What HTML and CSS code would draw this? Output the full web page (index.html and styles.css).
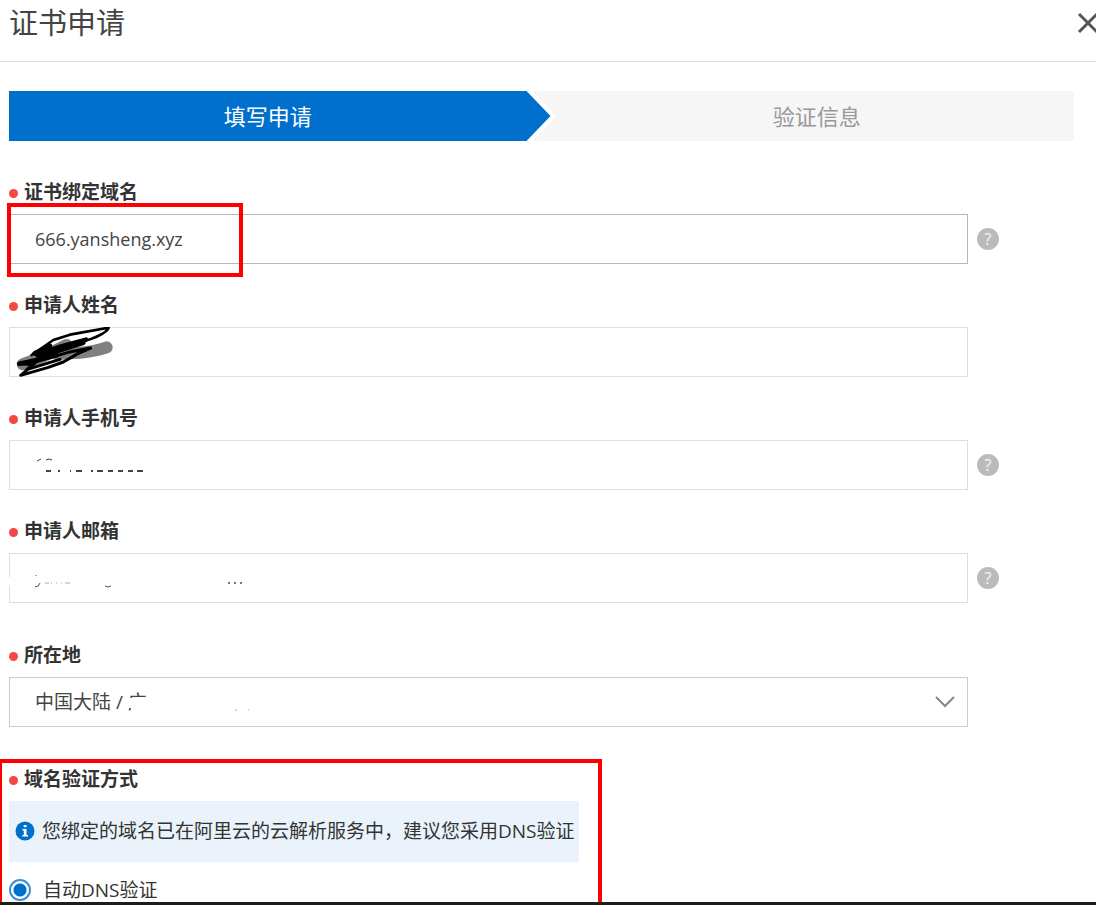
FILE: index.html
```html
<!DOCTYPE html>
<html lang="zh-CN">
<head>
<meta charset="utf-8">
<meta name="viewport" content="width=device-width, initial-scale=1">
<title>证书申请</title>
<link rel="stylesheet" href="styles.css">
</head>
<body>
<div class="panel">
  <header class="panel-header">
    <h1 class="title">证书申请</h1>
    <button class="close" type="button" aria-label="关闭">
      <svg width="22" height="22" viewBox="0 0 22 22"><path d="M2 2L20 20M20 2L2 20"/></svg>
    </button>
  </header>

  <form class="form">
    <ol class="steps">
      <li class="step step-active">填写申请</li>
      <li class="step">验证信息</li>
    </ol>

    <div class="group">
      <label class="label" for="domain">证书绑定域名</label>
      <div class="row">
        <div class="field">
          <input class="control control-dark" id="domain" type="text" value="666.yansheng.xyz">
          <span class="mark mark-domain"></span>
        </div>
        <button class="help" type="button" aria-label="帮助">?</button>
      </div>
    </div>

    <div class="group">
      <label class="label" for="name">申请人姓名</label>
      <div class="row">
        <div class="field">
          <input class="control" id="name" type="text">
          <svg class="ink" width="107" height="52" viewBox="27 111 321 156" fill="none" stroke-linecap="round" stroke-linejoin="round">
            <path d="M68 223L130 199L200 165" stroke="#808080" stroke-width="36"/>
            <path d="M170 192L240 188Q285 184 320 172" stroke="#808080" stroke-width="36"/>
            <path d="M95 195L160 150L210 134L326 113Q318 132 260 151L150 190" stroke="#000" stroke-width="8"/>
            <path d="M104 190L150 168M112 195L180 170L258 149M125 199L200 174L250 158M58 221L100 212L170 196" stroke="#000" stroke-width="14"/>
            <path d="M60 221L100 224L62 256L145 232L190 216L235 190L272 174L205 187L110 215L80 239L180 208" stroke="#000" stroke-width="9"/>
          </svg>
        </div>
      </div>
    </div>

    <div class="group">
      <label class="label" for="phone">申请人手机号</label>
      <div class="row">
        <div class="field">
          <input class="control" id="phone" type="tel">
          <svg class="ink" width="160" height="50" viewBox="0 0 160 50" fill="none" stroke="#444">
            <path d="M28 21L32 19M37 20Q40 18 43 20"/>
            <path d="M37 31H42M49 31H51M61 31H62M67 31H73M82 31H84M88 31H94M99 31H104M109 31H114M119 31H124M128 31H134" stroke-width="2"/>
          </svg>
        </div>
        <button class="help" type="button" aria-label="帮助">?</button>
      </div>
    </div>

    <div class="group">
      <label class="label" for="email">申请人邮箱</label>
      <div class="row">
        <div class="field">
          <input class="control" id="email" type="email">
          <svg class="ink" width="240" height="50" viewBox="0 0 240 50" fill="none" stroke="#555">
            <path d="M0 24V32" stroke="#fff" stroke-width="4"/>
            <path d="M27 22V23M31 30Q30 34 26 34M96 33Q99 35 102 33"/>
            <path d="M36 30H40M42 30H43M47 30H48M52 30H53M56 30H61" stroke="#aaa"/>
            <path d="M219 30H221M225 30H227M231 30H233" stroke="#777" stroke-width="2"/>
          </svg>
        </div>
        <button class="help" type="button" aria-label="帮助">?</button>
      </div>
    </div>

    <div class="group group-spaced">
      <label class="label" for="region">所在地</label>
      <div class="row">
        <div class="field">
          <select class="control control-mid" id="region"><option>中国大陆 / 广</option></select>
          <svg class="ink" width="250" height="50" viewBox="0 0 250 50" fill="none">
            <path d="M119 21H142V40H122V31H119Z" fill="#fff"/>
            <path d="M226 33H228M239 33H240" stroke="#aaa"/>
          </svg>
          <svg class="arrow" width="22" height="14" viewBox="0 0 22 14"><path d="M2 2L11 11L20 2"/></svg>
        </div>
      </div>
    </div>

    <fieldset class="group group-spaced verify">
      <legend class="label">域名验证方式</legend>
      <span class="mark mark-verify"></span>
      <p class="notice">
        <svg class="info" width="20" height="20" viewBox="0 0 20 20"><circle cx="10" cy="10" r="9.5" fill="#0070cc"/><path d="M8.7 4H11.5V6.3H8.7ZM7.5 8H11.5V14H13V15.5H7.3V14H8.8V9.5H7.5Z" fill="#fff"/></svg>
        <span>您绑定的域名已在阿里云的云解析服务中，建议您采用DNS验证</span>
      </p>
      <label class="choice"><input class="radio" type="radio" name="verify" checked>自动DNS验证</label>
    </fieldset>
  </form>
  <footer class="edge"></footer>
</div>
</body>
</html>
```
FILE: styles.css
```css
* {
  box-sizing: border-box;
}

body {
  margin: 0;
  background: #fff;
  color: #333;
  font: 19px/24px "Open Sans", "Noto Sans CJK SC", sans-serif;
}

.panel {
  display: flex;
  flex-direction: column;
  min-height: 100vh;
  overflow: hidden;
}

.panel-header {
  display: flex;
  justify-content: space-between;
  align-items: center;
  height: 62px;
  padding: 0 0 15px 9px;
  border-bottom: 1px solid #dedede;
}

.title {
  margin: 0;
  color: #444;
  font-size: 29px;
  line-height: 40px;
  font-weight: 400;
}

.close {
  display: flex;
  margin-right: -3px;
  padding: 0;
  border: 0;
  background: none;
}

.close path {
  fill: none;
  stroke: #555;
  stroke-width: 3;
}

.form {
  flex: 1;
  padding: 29px 0 0 9px;
}

.steps {
  display: grid;
  grid-template-columns: 1fr 1fr;
  margin: 0 22px 39px 0;
  padding: 0;
  list-style: none;
  background: #f6f6f6;
  color: #999;
  font-size: 22px;
  line-height: 50px;
  text-align: center;
}

.step {
  padding-left: 18px;
}

.step-active {
  position: relative;
  margin-right: 15px;
  padding: 0;
  background: #0070cc;
  color: #fff;
}

.step-active::before,
.step-active::after {
  content: "";
  position: absolute;
  top: 0;
  left: 100%;
  width: 24px;
  height: 50px;
  background: #0070cc;
  clip-path: polygon(0 0, 100% 50%, 0 100%);
}

.step-active::before {
  width: 30px;
  background: #fff;
  clip-path: polygon(0 0, 20% 0, 100% 50%, 20% 100%, 0 100%);
}

.group {
  margin: 0 0 29px;
  padding: 0;
  border: 0;
}

.group-spaced {
  margin-top: 40px;
}

.label {
  display: flex;
  align-items: center;
  gap: 6px;
  margin-bottom: 10px;
  padding: 0;
  font-weight: 700;
}

.label::before {
  content: "";
  width: 9px;
  height: 9px;
  margin-top: 3px;
  border-radius: 50%;
  background: #f54743;
}

.row {
  display: grid;
  grid-template-columns: 1fr 22px;
  align-items: center;
  gap: 9px;
  padding-right: 97px;
}

.field {
  position: relative;
}

.control {
  display: block;
  width: 100%;
  height: 50px;
  padding: 0 25px;
  border: 1px solid #dedede;
  border-radius: 0;
  background: #fff;
  color: #444;
  font: inherit;
  font-size: 18px;
  appearance: none;
}

.control-dark {
  border-color: #b8b8b8;
}

.control-mid {
  border-color: #ccc;
  font-size: 19px;
}

.help {
  width: 22px;
  height: 22px;
  padding: 0;
  border: 0;
  border-radius: 50%;
  background: #bbb;
  color: #f6f6f6;
  font: 16px/22px "Open Sans", sans-serif;
}

.ink {
  position: absolute;
  top: 0;
  left: 0;
  pointer-events: none;
}

.arrow {
  position: absolute;
  top: 18px;
  right: 12px;
  pointer-events: none;
}

.arrow path {
  fill: none;
  stroke: #888;
  stroke-width: 2;
}

.mark {
  position: absolute;
  border: 4px solid #f00;
  pointer-events: none;
}

.mark-domain {
  top: -11px;
  left: -2px;
  width: 236px;
  height: 74px;
}

.verify {
  position: relative;
  margin-bottom: 0;
}

.mark-verify {
  top: -42px;
  bottom: 0;
  left: -11px;
  width: 604px;
  border-bottom: 0;
}

.notice {
  display: flex;
  align-items: center;
  gap: 7px;
  width: fit-content;
  margin: 0 0 16px;
  padding: 18px 4px 19px 6px;
  background: #eaf3fb;
}

.info {
  flex: none;
}

.choice {
  display: flex;
  align-items: center;
  gap: 12px;
}

.radio {
  width: 22px;
  height: 22px;
  margin: 0;
  border: 2px solid #3a8fd8;
  border-radius: 50%;
  background: radial-gradient(circle, #0070cc 6px, #fff 7px);
  appearance: none;
}

.edge {
  height: 3px;
  background: #172015;
}
```
